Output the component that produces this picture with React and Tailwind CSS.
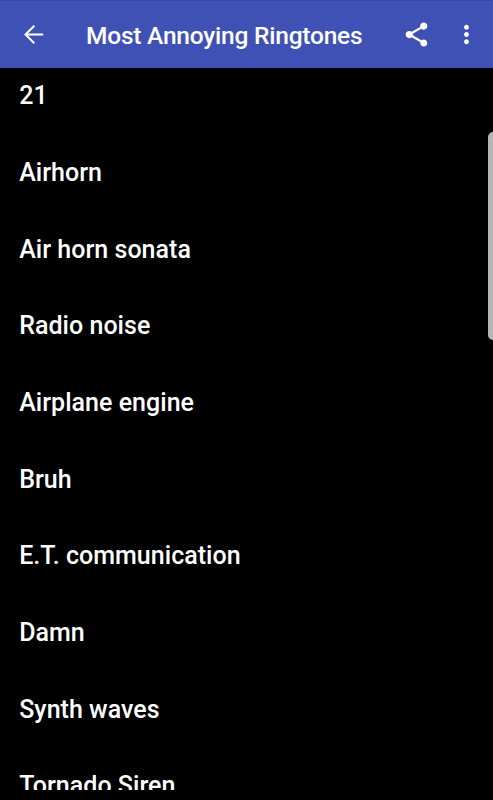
const ringtones = [
  "21",
  "Airhorn",
  "Air horn sonata",
  "Radio noise",
  "Airplane engine",
  "Bruh",
  "E.T. communication",
  "Damn",
  "Synth waves",
  "Tornado Siren",
];

function Icon({ d, className }) {
  return (
    <svg viewBox="0 0 24 24" fill="currentColor" className={className}>
      <path d={d} />
    </svg>
  );
}

export default function App() {
  return (
    <div className="relative flex h-screen flex-col overflow-hidden bg-black font-['Roboto',sans-serif] font-medium text-white">
      <header className="flex h-[68px] shrink-0 items-center border-t border-[#3545a0] bg-[#3f51b5] pl-[19px] pr-3">
        <button aria-label="Back">
          <Icon className="size-[29px]" d="M20 11.15H7.45l5.8-5.8L12.1 4.2 4.2 12l7.9 7.8 1.15-1.15-5.8-5.8H20v-1.7z" />
        </button>
        <h1 className="ml-[38px] flex-1 whitespace-nowrap pt-0.5 text-[24.5px] leading-8 tracking-[-0.22px]">Most Annoying Ringtones</h1>
        <button aria-label="Share" className="mr-[21px]">
          <Icon
            className="size-[29px]"
            d="M18 16.08c-.76 0-1.44.3-1.96.77L8.91 12.7c.05-.23.09-.46.09-.7s-.04-.47-.09-.7l7.05-4.11c.54.5 1.25.81 2.04.81 1.66 0 3-1.34 3-3s-1.34-3-3-3-3 1.34-3 3c0 .24.04.47.09.7L8.04 9.81C7.5 9.31 6.79 9 6 9c-1.66 0-3 1.34-3 3s1.34 3 3 3c.79 0 1.5-.31 2.04-.81l7.12 4.16c-.05.21-.08.43-.08.65 0 1.61 1.31 2.92 2.92 2.92s2.92-1.31 2.92-2.92-1.31-2.92-2.92-2.92z"
          />
        </button>
        <button aria-label="More options">
          <Icon
            className="size-[29px]"
            d="M12 8c1.1 0 2-.9 2-2s-.9-2-2-2-2 .9-2 2 .9 2 2 2zm0 2c-1.1 0-2 .9-2 2s.9 2 2 2 2-.9 2-2-.9-2-2-2zm0 6c-1.1 0-2 .9-2 2s.9 2 2 2 2-.9 2-2-.9-2-2-2z"
          />
        </button>
      </header>
      <main className="mb-[10px] min-h-0 flex-1 overflow-hidden">
        <ul className="-mt-[10.4px]">
          {ringtones.map((name) => (
            <li key={name} className="flex h-[76.7px] items-center pl-[19.2px] text-[25px] tracking-[0.03px]">
              {name}
            </li>
          ))}
        </ul>
      </main>
      <div className="absolute right-0 top-[132px] h-[208px] w-[5px] rounded-l-[5px] bg-[#b5b5b5]" />
    </div>
  );
}
